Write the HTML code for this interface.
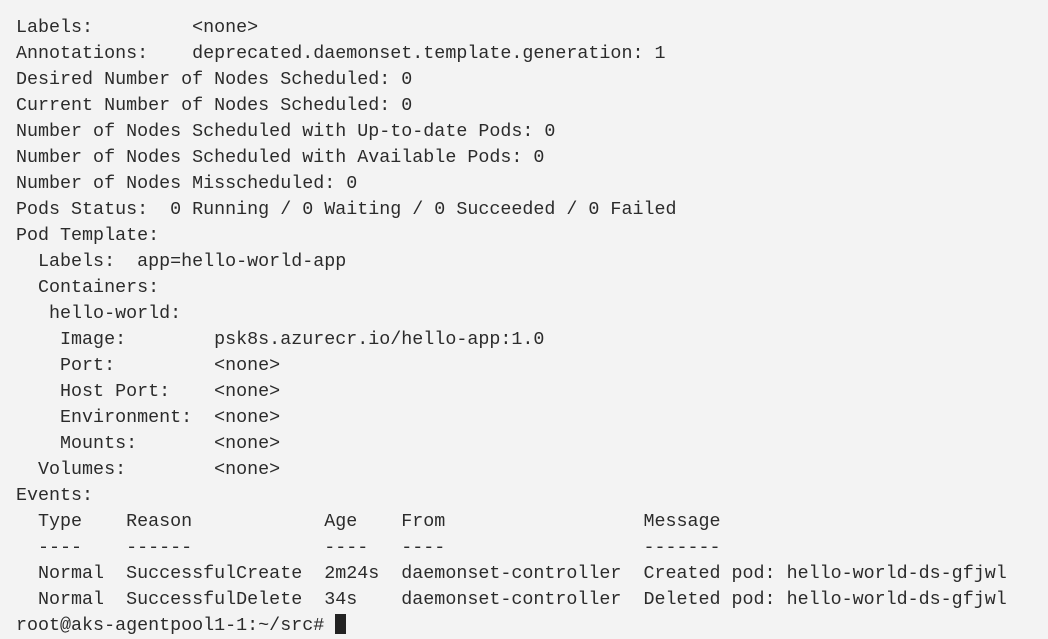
<!DOCTYPE html>
<html><head><style>
html,body{margin:0;padding:0;background:#f3f3f3;width:1048px;height:620px;overflow:hidden}
pre{margin:0;position:absolute;left:16px;top:15px;font-family:"Liberation Mono",monospace;font-size:18.35px;line-height:26px;color:#2b2b2b;white-space:pre}
.cur{display:inline-block;width:11px;height:20px;background:#222;vertical-align:-4px}
</style></head><body>
<pre>Labels:         &lt;none&gt;
Annotations:    deprecated.daemonset.template.generation: 1
Desired Number of Nodes Scheduled: 0
Current Number of Nodes Scheduled: 0
Number of Nodes Scheduled with Up-to-date Pods: 0
Number of Nodes Scheduled with Available Pods: 0
Number of Nodes Misscheduled: 0
Pods Status:  0 Running / 0 Waiting / 0 Succeeded / 0 Failed
Pod Template:
  Labels:  app=hello-world-app
  Containers:
   hello-world:
    Image:        psk8s.azurecr.io/hello-app:1.0
    Port:         &lt;none&gt;
    Host Port:    &lt;none&gt;
    Environment:  &lt;none&gt;
    Mounts:       &lt;none&gt;
  Volumes:        &lt;none&gt;
Events:
  Type    Reason            Age    From                  Message
  ----    ------            ----   ----                  -------
  Normal  SuccessfulCreate  2m24s  daemonset-controller  Created pod: hello-world-ds-gfjwl
  Normal  SuccessfulDelete  34s    daemonset-controller  Deleted pod: hello-world-ds-gfjwl
root@aks-agentpool1-1:~/src# <span class="cur"></span></pre>
</body></html>
